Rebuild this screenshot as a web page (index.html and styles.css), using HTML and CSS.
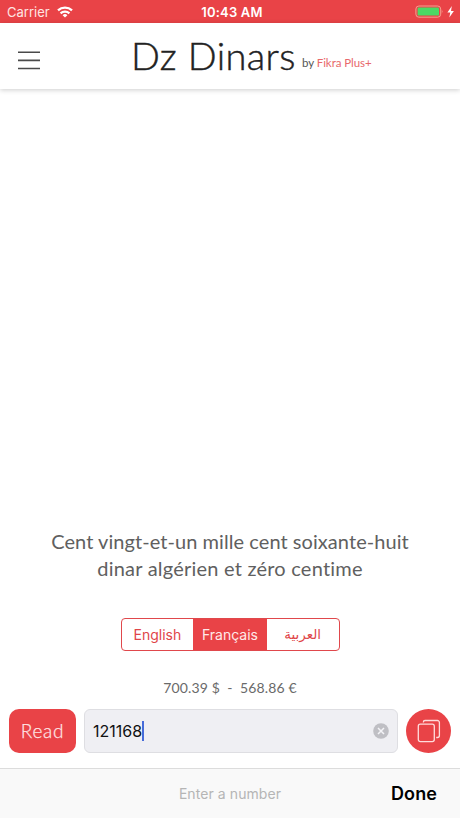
FILE: index.html
```
<!DOCTYPE html>
<html lang="fr">
<head>
<meta charset="utf-8">
<title>Dz Dinars</title>
<link rel="stylesheet" href="styles.css">
</head>
<body>
<div class="status">
  <div class="carrier"><span>Carrier</span>
    <svg width="16" height="12" viewBox="0 0 16 12" fill="none" stroke="#fff" stroke-width="2.3"><path d="M1 4.4a10.2 10.2 0 0 1 14 0M3.6 7.3a6.4 6.4 0 0 1 8.8 0"/><path d="M8 11.6 5.6 9.2a3.4 3.4 0 0 1 4.8 0z" fill="#fff" stroke="none"/></svg>
  </div>
  <div class="time">10:43 AM</div>
  <div class="power">
    <svg width="42" height="14" viewBox="0 0 42 14"><rect x=".9" y="1" width="24.8" height="11.2" rx="3" fill="none" stroke="#f5a08f"/><rect x="2.6" y="2.6" width="21.4" height="8" rx="1.2" fill="#4cd964"/><path d="M26.8 4.8q1.6 1.8 0 3.6z" fill="#f5a08f"/><path d="M36.8 1 32.4 7.4h2.9l-1 5 4.6-6.5H36z" fill="#fff"/></svg>
  </div>
</div>
<header class="header">
  <svg class="menu" width="22" height="19" viewBox="0 0 22 19" stroke="#4a4a4a" stroke-width="1.6"><path d="M0 1.2h22M0 9.4h22M0 17.5h22"/></svg>
  <div class="brand"><h1>Dz Dinars</h1><span class="by">by <b>Fikra Plus+</b></span></div>
</header>
<main class="main">
  <p class="words"><span class="line1">Cent vingt-et-un mille cent soixante-huit</span><br><span class="line2">dinar algérien et zéro centime</span></p>
  <div class="segments">
    <div class="segment en">English</div>
    <div class="segment active">Français</div>
    <div class="segment ar" lang="ar">العربية</div>
  </div>
  <div class="rates">700.39 $&nbsp; -&nbsp; 568.86 €</div>
  <div class="entry">
    <div class="read">Read</div>
    <div class="field"><span class="value">121168</span><i class="caret"></i>
      <svg class="clear" width="16" height="16" viewBox="0 0 16 16"><circle cx="8" cy="8" r="7.8" fill="#bfbfc4"/><path d="m5 5 6 6m0-6-6 6" stroke="#f4f4f7" stroke-width="1.5"/></svg>
    </div>
    <div class="copy">
      <svg width="24" height="24" viewBox="0 0 24 24" fill="none" stroke="#ffdcdc" stroke-width="1.3"><rect x="1.3" y="5.2" width="16" height="17.4" rx="2"/><path d="M6.4 3.4v-.3a1.6 1.6 0 0 1 1.6-1.6h12.4a2 2 0 0 1 2 2v13a2 2 0 0 1-2 2h-1.2"/></svg>
    </div>
  </div>
</main>
<footer class="toolbar"><span class="hint">Enter a number</span><span class="done">Done</span></footer>
</body>
</html>
```
FILE: styles.css
```
* { box-sizing: border-box; }
body {
  margin: 0;
  width: 460px;
  height: 818px;
  display: flex;
  flex-direction: column;
  overflow: hidden;
  background: #fff;
  font-family: Lato, sans-serif;
}
.status {
  height: 23px;
  flex: none;
  display: grid;
  grid-template-columns: 1fr auto 1fr;
  align-items: center;
  padding: 1px 3px 0 7px;
  background: #e94347;
  color: #fff;
  font: 13px/22px Inter, sans-serif;
}
.carrier { display: flex; align-items: center; gap: 7px; color: #ffe5e2; }
.carrier svg { margin-top: -1px; }
.time { font-weight: 600; font-size: 13px; letter-spacing: .2px; }
.power { display: flex; justify-content: flex-end; margin-top: -1px; }
.header {
  height: 66px;
  flex: none;
  display: flex;
  padding-left: 18px;
  box-shadow: 0 1px 5px rgba(0, 0, 0, .2);
}
.menu { margin-top: 28px; }
.brand { display: flex; align-items: flex-start; margin-left: 91px; white-space: nowrap; }
h1 { margin: 0; width: 171px; font-size: 38px; font-weight: 300; line-height: 64px; color: #222; letter-spacing: .4px; -webkit-text-stroke: .45px #222; }
.by { margin-top: 31px; font-size: 11.5px; line-height: 18px; color: #555; letter-spacing: -.05px; }
.by b { font-weight: 400; color: #e8686b; }
.main { flex: 1; display: flex; flex-direction: column; align-items: center; justify-content: flex-end; padding: 0 9px 15px; }
.words { margin: 0 0 36px; text-align: center; font-size: 20px; line-height: 27px; color: #606060; white-space: nowrap; }
.line1 { letter-spacing: .06px; }
.line2 { letter-spacing: .22px; }
.segments {
  display: flex;
  width: 219px;
  height: 33px;
  border: 1px solid #e0484c;
  border-radius: 4px;
  overflow: hidden;
  color: #df4549;
  font: 14px/31px Inter, sans-serif;
}
.segment { width: 72px; text-align: center; }
.active { width: 74px; background: #e94347; color: #ffe9e9; }
.ar { font-family: "DejaVu Sans", sans-serif; font-size: 13.5px; }
.rates { margin: 27px 0 12px; font-size: 14px; line-height: 19px; color: #6a6a6a; letter-spacing: .12px; }
.entry { display: flex; gap: 8px; width: 442px; height: 44px; }
.read { width: 67px; border-radius: 10px; background: #e94347; color: #ffe6e6; text-align: center; font-size: 19px; font-weight: 300; line-height: 43px; letter-spacing: .8px; -webkit-text-stroke: .25px #ffe6e6; }
.field { flex: 1; display: flex; align-items: center; padding: 0 8px; border: 1px solid #dedee2; border-radius: 6px; background: #efeff3; font: 16px Inter, sans-serif; color: #111; }
.value { letter-spacing: .02px; }
.caret { width: 2px; height: 20px; background: #466bd9; }
.clear { margin-left: auto; }
.copy { width: 45px; border-radius: 50%; background: #e94347; display: flex; align-items: center; justify-content: center; }
.toolbar {
  flex: none;
  height: 50px;
  display: grid;
  grid-template-columns: 1fr auto 1fr;
  align-items: center;
  padding: 0 23px;
  border-top: 1px solid #dcdcdc;
  background: #f9f9f9;
  font-family: Inter, sans-serif;
}
.hint { grid-column: 2; font-size: 14px; color: #b5b5b5; letter-spacing: .08px; }
.done { justify-self: end; font-size: 18px; font-weight: 600; color: #000; letter-spacing: .1px; }
```
